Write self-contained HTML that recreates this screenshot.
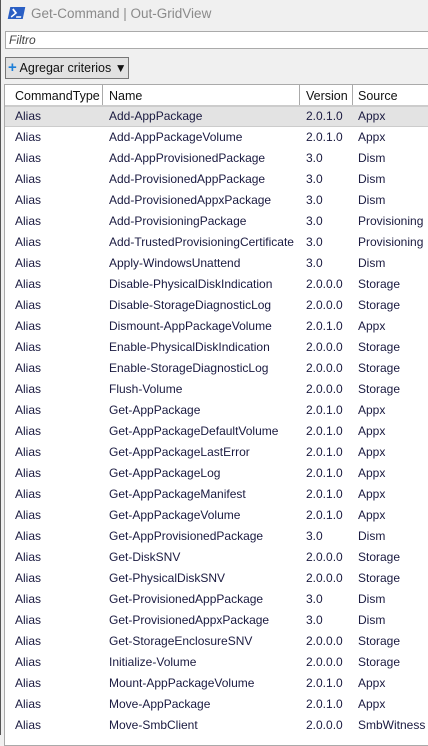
<!DOCTYPE html><html><head><style>
body{margin:0;width:428px;height:735px;overflow:hidden;background:#f0f0f0;font-family:"Liberation Sans",sans-serif;font-size:12px;position:relative}
.lb{position:absolute;left:0;top:0;width:1px;height:735px;background:#555}
.title{position:absolute;left:31px;top:6px;color:#8a8a8a;font-size:13.5px}
.icon{position:absolute;left:9px;top:7px;width:15px;height:12px;background:#2a5fc4;transform:skewX(-12deg)}
.icon svg{position:absolute;left:2px;top:1px}
.filter{position:absolute;left:5px;top:31px;width:430px;height:16px;background:#fff;border:1px solid #aaa;font-style:italic;color:#444;padding-left:3px;line-height:16px}
.btn{position:absolute;left:5px;top:57px;width:122px;height:20px;border:1px solid #777;background:#e1e1e1;line-height:20px;font-size:12.5px;color:#111}
.grid{position:absolute;left:4px;top:84px;width:440px;height:660px;background:#fff;border:1px solid #aaa}
.hdr{position:absolute;left:0;top:0;width:440px;height:20px;border-bottom:1px solid #ccc;background:#fff}
.hdr span{position:absolute;top:4px;color:#111;font-size:12.5px}
.sep{position:absolute;top:0;width:1px;height:20px;background:#aaa}
.row{position:absolute;left:0;width:440px;height:21px;color:#1a1a40;font-size:12px}
.row span{position:absolute;top:3px}
.sel{background:#e3e3e3;border-top:1px solid #ccc;border-bottom:1px solid #ccc;box-sizing:border-box}
.sel span{top:2px}
</style></head><body>
<div class="lb"></div>
<div class="icon"><svg width="12" height="10"><path d="M1 1 L5 5 L1 9" stroke="#fff" stroke-width="1.6" fill="none"/><path d="M6 9 H11" stroke="#fff" stroke-width="1.5"/></svg></div>
<div class="title">Get-Command | Out-GridView</div>
<div class="filter">Filtro</div>
<div class="btn"><span style="color:#1e7fd8;font-weight:bold;font-size:15px;margin-left:2px">+</span> Agregar criterios <span style="font-size:12px">▼</span></div>
<div class="grid">
<div class="hdr"><span style="left:10px">CommandType</span><div class="sep" style="left:97px"></div><span style="left:104px">Name</span><div class="sep" style="left:294px"></div><span style="left:301px">Version</span><div class="sep" style="left:347px"></div><span style="left:353px">Source</span></div>
<div id="rows"></div>
</div>
<script>
var d=[["Add-AppPackage","2.0.1.0","Appx"],["Add-AppPackageVolume","2.0.1.0","Appx"],["Add-AppProvisionedPackage","3.0","Dism"],["Add-ProvisionedAppPackage","3.0","Dism"],["Add-ProvisionedAppxPackage","3.0","Dism"],["Add-ProvisioningPackage","3.0","Provisioning"],["Add-TrustedProvisioningCertificate","3.0","Provisioning"],["Apply-WindowsUnattend","3.0","Dism"],["Disable-PhysicalDiskIndication","2.0.0.0","Storage"],["Disable-StorageDiagnosticLog","2.0.0.0","Storage"],["Dismount-AppPackageVolume","2.0.1.0","Appx"],["Enable-PhysicalDiskIndication","2.0.0.0","Storage"],["Enable-StorageDiagnosticLog","2.0.0.0","Storage"],["Flush-Volume","2.0.0.0","Storage"],["Get-AppPackage","2.0.1.0","Appx"],["Get-AppPackageDefaultVolume","2.0.1.0","Appx"],["Get-AppPackageLastError","2.0.1.0","Appx"],["Get-AppPackageLog","2.0.1.0","Appx"],["Get-AppPackageManifest","2.0.1.0","Appx"],["Get-AppPackageVolume","2.0.1.0","Appx"],["Get-AppProvisionedPackage","3.0","Dism"],["Get-DiskSNV","2.0.0.0","Storage"],["Get-PhysicalDiskSNV","2.0.0.0","Storage"],["Get-ProvisionedAppPackage","3.0","Dism"],["Get-ProvisionedAppxPackage","3.0","Dism"],["Get-StorageEnclosureSNV","2.0.0.0","Storage"],["Initialize-Volume","2.0.0.0","Storage"],["Mount-AppPackageVolume","2.0.1.0","Appx"],["Move-AppPackage","2.0.1.0","Appx"],["Move-SmbClient","2.0.0.0","SmbWitness"]];
var h="";d.forEach(function(r,i){h+='<div class="row'+(i==0?' sel':'')+'" style="top:'+(21+i*21)+'px"><span style="left:10px">Alias</span><span style="left:104px">'+r[0]+'</span><span style="left:301px">'+r[1]+'</span><span style="left:353px">'+r[2]+'</span></div>';});
document.getElementById("rows").innerHTML=h;
</script>
</body></html>
